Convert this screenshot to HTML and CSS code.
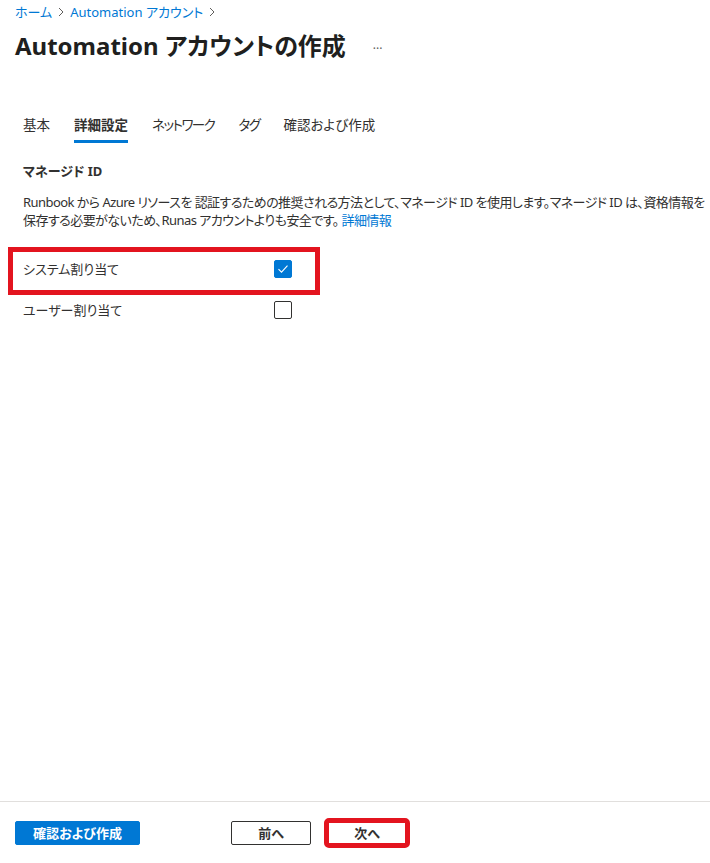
FILE: index.html
```html
<!DOCTYPE html>
<html lang="ja">
<head>
<meta charset="utf-8">
<title>Automation アカウントの作成</title>
<link rel="stylesheet" href="styles.css">
</head>
<body>
<div class="page">
  <main class="main">
    <nav class="breadcrumb">
      <a class="crumb">ホーム</a>
      <svg class="chev" width="8" height="10" viewBox="0 0 8 10"><path d="M2 1l4 4-4 4" fill="none" stroke="#605e5c" stroke-width="1"/></svg>
      <a class="crumb">Automation アカウント</a>
      <svg class="chev" width="8" height="10" viewBox="0 0 8 10"><path d="M2 1l4 4-4 4" fill="none" stroke="#605e5c" stroke-width="1"/></svg>
    </nav>
    <div class="title-row">
      <h1 class="title">Automation アカウントの作成</h1>
      <span class="more">···</span>
    </div>
    <div class="tabs">
      <span class="tab">基本</span>
      <span class="tab active">詳細設定</span>
      <span class="tab tight">ネットワーク</span>
      <span class="tab tight">タグ</span>
      <span class="tab">確認および作成</span>
    </div>
    <section class="section">
      <h2 class="section-title">マネージド ID</h2>
      <p class="desc">Runbook から Azure リソースを 認証するための推奨される方法として、マネージド ID を使用します。マネージド ID は、資格情報を<br>保存する必要がないため、Runas アカウントよりも安全です。 <a class="link">詳細情報</a></p>
      <div class="row highlighted">
        <span class="label">システム割り当て</span>
        <span class="checkbox checked"><svg width="12" height="10" viewBox="0 0 12 10"><path d="M1.5 5.2l3 3 6-6.5" fill="none" stroke="#fff" stroke-width="1.1"/></svg></span>
      </div>
      <div class="row second">
        <span class="label">ユーザー割り当て</span>
        <span class="checkbox"></span>
      </div>
    </section>
  </main>
  <footer class="footer">
    <button class="btn primary">確認および作成</button>
    <button class="btn secondary prev">前へ</button>
    <button class="btn secondary next">次へ</button>
  </footer>
</div>
</body>
</html>
```
FILE: styles.css
```css
html, body {
  margin: 0;
  padding: 0;
  background: #fff;
  overflow: hidden;
}
body {
  font-family: "Noto Sans", "Noto Sans CJK JP", sans-serif;
  font-feature-settings: "palt" 1;
  color: #323130;
  font-size: 13px;
}
.page {
  display: flex;
  flex-direction: column;
  height: 100vh;
}
.main {
  flex: 1;
  padding: 0 15px;
}
.breadcrumb {
  display: flex;
  align-items: center;
  gap: 5px;
  height: 24px;
  line-height: 24px;
  font-size: 13px;
}
.crumb {
  color: #0078d4;
}
.title-row {
  display: flex;
  align-items: center;
  margin-top: 6px;
  height: 32px;
}
.title {
  margin: 0;
  font-size: 24px;
  font-weight: 700;
  color: #201f1e;
  line-height: 32px;
}
.more {
  margin-left: 27px;
  margin-top: 4px;
  color: #605e5c;
  font-size: 12px;
}
.tabs {
  display: flex;
  margin-top: 53px;
  padding-left: 8px;
  gap: 24px;
}
.tab {
  font-size: 13.5px;
  line-height: 20px;
  padding-bottom: 5px;
  border-bottom: 3px solid transparent;
  color: #323130;
}
.tab.tight {
  letter-spacing: -1.5px;
}
.tab.active {
  font-weight: 700;
  border-bottom-color: #0078d4;
}
.section {
  padding-left: 8px;
}
.section-title {
  margin: 18px 0 0;
  font-size: 13px;
  font-weight: 700;
  line-height: 20px;
}
.desc {
  margin: 12px 0 0;
  font-size: 13px;
  line-height: 18px;
  letter-spacing: -0.55px;
  white-space: nowrap;
}
.link {
  color: #0078d4;
}
.row {
  display: grid;
  grid-template-columns: 251px 18px;
  align-items: center;
  width: 296px;
  height: 32px;
  box-sizing: border-box;
  padding: 0 0 4px 7px;
  margin-left: -7px;
}
.row.highlighted {
  margin-top: 26px;
  outline: 5px solid #e3141f;
  outline-offset: 3px;
}
.row.second {
  margin-top: 9px;
}
.label {
  font-size: 13px;
  line-height: 18px;
}
.checkbox {
  width: 18px;
  height: 18px;
  box-sizing: border-box;
  border: 1px solid #323130;
  border-radius: 2px;
  display: flex;
  align-items: center;
  justify-content: center;
}
.checkbox.checked {
  background: #0078d4;
  border-color: #0078d4;
}
.footer {
  display: flex;
  align-items: flex-start;
  height: 62px;
  border-top: 1px solid #e1dfdd;
  padding: 19px 15px 0;
  box-sizing: border-box;
}
.btn {
  height: 24px;
  box-sizing: border-box;
  border-radius: 2px;
  font-family: "Noto Sans", "Noto Sans CJK JP", sans-serif;
  font-feature-settings: "palt" 1;
  font-size: 13px;
  font-weight: 700;
  padding: 0;
  line-height: 20px;
}
.btn.primary {
  width: 125px;
  background: #0078d4;
  color: #fff;
  border: 1px solid #0078d4;
}
.btn.secondary {
  width: 80px;
  background: #fff;
  color: #323130;
  border: 1px solid #323130;
}
.btn.prev {
  margin-left: 91px;
}
.btn.next {
  margin-left: 16px;
  outline: 5px solid #e3141f;
  outline-offset: -2px;
}
```
